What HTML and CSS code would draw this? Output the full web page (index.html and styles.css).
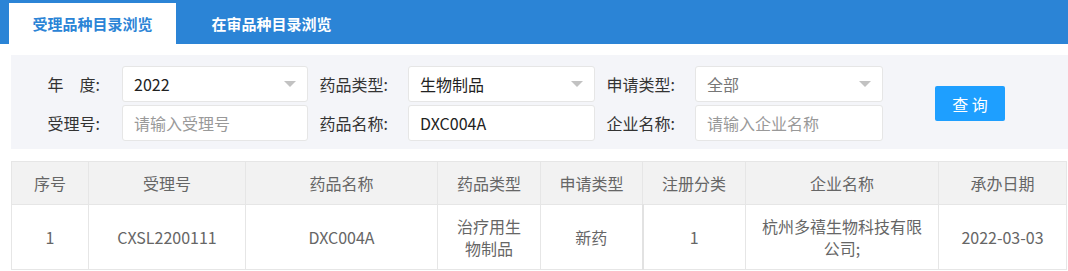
FILE: index.html
```html
<!DOCTYPE html>
<html lang="zh-CN">
  <head>
    <meta charset="UTF-8" />
    <meta name="viewport" content="width=device-width, initial-scale=1.0" />
    <title>品种目录浏览</title>
    <link rel="stylesheet" href="styles.css">
  </head>
  <body>
    <div class="tabs">
      <div class="tab tab-active">受理品种目录浏览</div>
      <div class="tab">在审品种目录浏览</div>
    </div>
    <div class="search">
      <div class="fields">
        <label class="label label-first">年&#12288;度:</label>
        <div class="select">
          <span class="value">2022</span>
          <span class="arrow"></span>
        </div>
        <label class="label">药品类型:</label>
        <div class="select">
          <span class="value">生物制品</span>
          <span class="arrow"></span>
        </div>
        <label class="label">申请类型:</label>
        <div class="select">
          <span class="value muted">全部</span>
          <span class="arrow"></span>
        </div>

        <label class="label label-first">受理号:</label>
        <input class="input" type="text" placeholder="请输入受理号" />
        <label class="label">药品名称:</label>
        <input class="input" type="text" value="DXC004A" />
        <label class="label">企业名称:</label>
        <input class="input" type="text" placeholder="请输入企业名称" />
      </div>
      <button class="btn">查 询</button>
    </div>
    <table class="list">
      <colgroup>
        <col style="width: 77px" />
        <col style="width: 157px" />
        <col style="width: 192px" />
        <col style="width: 103px" />
        <col style="width: 102px" />
        <col style="width: 103px" />
        <col style="width: 193px" />
        <col style="width: 128px" />
      </colgroup>
      <thead>
        <tr>
          <th>序号</th>
          <th>受理号</th>
          <th>药品名称</th>
          <th>药品类型</th>
          <th>申请类型</th>
          <th>注册分类</th>
          <th>企业名称</th>
          <th>承办日期</th>
        </tr>
      </thead>
      <tbody>
        <tr>
          <td>1</td>
          <td>CXSL2200111</td>
          <td>DXC004A</td>
          <td>治疗用生物制品</td>
          <td class="sep">新药</td>
          <td>1</td>
          <td>杭州多禧生物科技有限公司;</td>
          <td>2022-03-03</td>
        </tr>
      </tbody>
    </table>
  </body>
</html>
```

FILE: styles.css
```css
* {
  box-sizing: border-box;
}
body {
  margin: 0;
  font-family: "Noto Sans CJK SC", "Microsoft YaHei", sans-serif;
  color: #333;
  background: #fff;
}

.tabs {
  display: flex;
  gap: 12px;
  height: 44px;
  padding: 3px 0 0 9px;
  background: #2b84d6;
}
.tab {
  width: 167px;
  height: 41px;
  line-height: 41px;
  text-align: center;
  font-size: 15px;
  font-weight: bold;
  color: #fff;
}
.tab-active {
  background: #fff;
  color: #2b84d6;
}

.search {
  display: flex;
  align-items: center;
  margin: 11px 0 0 11px;
  padding: 11px 0 8px;
  background: #f4f5f9;
}
.fields {
  display: grid;
  grid-template-columns: 111px 186px 100px 187px 100px 188px;
  row-gap: 3px;
}
.label {
  padding-right: 20px;
  line-height: 36px;
  text-align: right;
  font-size: 16px;
  color: #333;
}
.label-first {
  padding-right: 22px;
}
.select,
.input {
  height: 36px;
  border: 1px solid #e6e6e6;
  border-radius: 3px;
  background: #fff;
}
.select {
  display: flex;
  align-items: center;
  justify-content: space-between;
  padding: 0 11px;
  font-size: 16px;
}
.value {
  color: #222;
}
.muted {
  color: #777;
}
.arrow {
  width: 0;
  height: 0;
  border-left: 6px solid transparent;
  border-right: 6px solid transparent;
  border-top: 6px solid #c2c2c2;
}
.input {
  width: 100%;
  padding: 0 11px;
  font-family: inherit;
  font-size: 16px;
  color: #222;
  outline: none;
}
.input::placeholder {
  color: #999;
}
.btn {
  width: 70px;
  height: 35px;
  margin-left: 52px;
  border: none;
  border-radius: 2px;
  background: #1e9fff;
  color: #fff;
  font-family: inherit;
  font-size: 16px;
  cursor: pointer;
}

.list {
  width: 1055px;
  margin: 12px 0 0 11px;
  border-collapse: collapse;
  table-layout: fixed;
  font-size: 16px;
  color: #666;
}
.list th,
.list td {
  padding: 10px 15px;
  line-height: 22px;
  text-align: center;
  font-weight: normal;
  border: 1px solid #e6e6e6;
}
.list th {
  background: #f2f2f2;
}
.list td {
  height: 65px;
}
.list .sep {
  border-right: 2px solid #e2e2e2;
}
```
